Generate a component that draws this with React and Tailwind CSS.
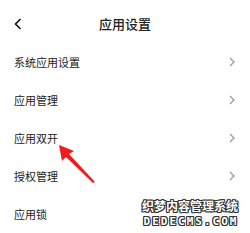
import React from "react"

const rows = [
  { label: "系统应用设置", arrow: true },
  { label: "应用管理", arrow: true },
  { label: "应用双开", arrow: true },
  { label: "授权管理", arrow: true },
  { label: "应用锁", arrow: false },
]

function Chevron() {
  return (
    <svg width="6" height="10" viewBox="0 0 6 10" className="text-[#9a9a9a]">
      <path d="M1 1l4 4-4 4" fill="none" stroke="currentColor" strokeWidth="1.3" />
    </svg>
  )
}

export default function App() {
  return (
    <div
      className="relative w-[250px] h-[233px] overflow-hidden bg-white text-[#222]"
      style={{ fontFamily: '"Noto Sans CJK SC", "Noto Sans", sans-serif' }}
    >
      {/* header */}
      <div className="flex items-start h-[43px] pt-[14px] pl-[14px] pr-[22px]">
        <svg width="8" height="12" viewBox="0 0 8 12" className="mt-[4px]">
          <path d="M6.5 1L1.5 6l5 5" fill="none" stroke="#111" strokeWidth="1.6" />
        </svg>
        <span className="flex-1 text-center text-[13px] leading-[19px] font-medium">应用设置</span>
      </div>

      {/* list */}
      <div className="flex flex-col">
        {rows.map((r) => (
          <div key={r.label} className="flex items-center justify-between h-[38px] pl-[14px] pr-[15px]">
            <span className="text-[11px]">{r.label}</span>
            {r.arrow && <Chevron />}
          </div>
        ))}
      </div>

      {/* red arrow overlay */}
      <svg width="50" height="50" viewBox="0 0 50 50" className="absolute left-[55px] top-[140px]">
        <polygon points="4,5 19,11 14,14 40,42 38,43 11,17 7,21" fill="#ee1c1c" />
      </svg>

      {/* watermark */}
      <div
        className="absolute left-[141px] top-[199px] w-[98px] flex flex-col items-center text-white font-bold leading-none"
        style={{ textShadow: "1px 0 #333, -1px 0 #333, 0 1px #333, 0 -1px #333, 1px 1px #333, -1px -1px #333, 1px -1px #333, -1px 1px #333" }}
      >
        <span className="text-[12px] leading-[14px]">织梦内容管理系统</span>
        <span
          className="mt-[3px] text-[11px] leading-[12px] tracking-[2px] pl-[2px]"
          style={{ fontFamily: '"DejaVu Sans Mono", monospace' }}
        >
          DEDECMS.COM
        </span>
      </div>
    </div>
  )
}
